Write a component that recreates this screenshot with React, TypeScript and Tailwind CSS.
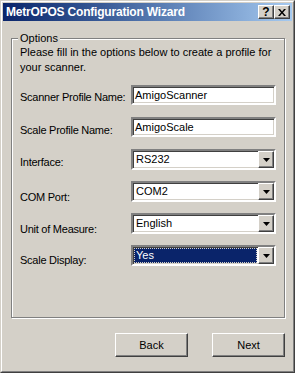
import React from "react";

const raised =
  "border border-t-white border-l-white border-b-[#404040] border-r-[#404040] shadow-[inset_-1px_-1px_0_#808080]";
const sunken =
  "border-2 border-t-[#808080] border-l-[#808080] border-b-white border-r-white shadow-[inset_1px_1px_0_#404040,inset_-1px_-1px_0_#d4d0c8]";

type Field = { label: string; value: string; kind: "text" | "select"; labelPad: number; focused?: boolean };

const fields: Field[] = [
  { label: "Scanner Profile Name:", value: "AmigoScanner", kind: "text", labelPad: 4 },
  { label: "Scale Profile Name:", value: "AmigoScale", kind: "text", labelPad: 5 },
  { label: "Interface:", value: "RS232", kind: "select", labelPad: 5 },
  { label: "COM Port:", value: "COM2", kind: "select", labelPad: 8 },
  { label: "Unit of Measure:", value: "English", kind: "select", labelPad: 8 },
  { label: "Scale Display:", value: "Yes", kind: "select", labelPad: 7, focused: true },
];

const DropButton: React.FC = () => (
  <div className={`w-[16px] h-[17px] bg-[#d4d0c8] flex items-center justify-center ${raised}`}>
    <svg width="7" height="4" viewBox="0 0 7 4">
      <path d="M0 0h7L3.5 4z" fill="#000" />
    </svg>
  </div>
);

const Row: React.FC<{ f: Field }> = ({ f }) => (
  <div className="flex h-[32px]">
    <div className="w-[111px] whitespace-nowrap tracking-[-0.25px]" style={{ paddingTop: f.labelPad }}>
      {f.label}
    </div>
    {f.kind === "text" ? (
      <div className={`w-[145px] h-[20px] bg-white flex items-center pl-[2px] ${sunken}`}>{f.value}</div>
    ) : (
      <div className={`w-[145px] h-[21px] bg-white flex items-center ${sunken}`}>
        <div className="flex-1 h-full p-[1px]">
          {f.focused ? (
            <div className="h-full bg-[#0a246a] text-white border border-dotted border-[#d4d0c8] flex items-center pl-[1px]">
              {f.value}
            </div>
          ) : (
            <div className="h-full flex items-center pl-[2px]">{f.value}</div>
          )}
        </div>
        <DropButton />
      </div>
    )}
  </div>
);

const CaptionButton: React.FC<{ children: React.ReactNode }> = ({ children }) => (
  <div
    className={`w-[16px] h-[14px] bg-[#d4d0c8] flex items-center justify-center text-black text-[12px] font-bold leading-none ${raised}`}
  >
    {children}
  </div>
);

export default function App() {
  return (
    <div
      className="w-[295px] h-[373px] border border-t-[#d4d0c8] border-l-[#d4d0c8] border-b-[#404040] border-r-[#404040] text-[11px] text-black"
      style={{ fontFamily: '"Liberation Sans", Arial, sans-serif' }}
    >
      <div className="h-full border border-t-white border-l-white border-b-[#808080] border-r-[#808080] bg-[#d4d0c8] p-[1px] flex flex-col">
        <div className="h-[18px] bg-gradient-to-r from-[#0a246a] to-[#a6caf0] flex items-center pl-[3px] pr-[2px]">
          <span className="flex-1 text-white font-bold text-[12px] tracking-[-0.2px]">MetrOPOS Configuration Wizard</span>
          <div className="flex">
            <CaptionButton>?</CaptionButton>
            <CaptionButton>
              <svg width="8" height="7" viewBox="0 0 8 7">
                <path d="M0 0h2l2 2.5L6 0h2L5 3.5 8 7H6L4 4.5 2 7H0l3-3.5z" fill="#000" />
              </svg>
            </CaptionButton>
          </div>
        </div>

        <div className="mt-[17px] ml-[8px] w-[274px] h-[280px] relative border border-[#808080] shadow-[inset_1px_1px_0_#fff,1px_1px_0_#fff]">
          <span className="absolute -top-[8px] left-[6px] px-[2px] bg-[#d4d0c8] leading-[14px]">Options</span>
          <div className="pl-[8px] pt-[6px]">
            <p className="leading-[15px] w-[262px]">
              Please fill in the options below to create a profile for your scanner.
            </p>
            <div className="mt-[10px] flex flex-col">
              {fields.map((f) => (
                <Row key={f.label} f={f} />
              ))}
            </div>
          </div>
        </div>

        <div className="mt-[15px] flex justify-end gap-[24px] pr-[7px]">
          <button className={`w-[73px] h-[24px] bg-[#d4d0c8] ${raised}`}>Back</button>
          <button className={`w-[73px] h-[24px] bg-[#d4d0c8] ${raised}`}>Next</button>
        </div>
      </div>
    </div>
  );
}
